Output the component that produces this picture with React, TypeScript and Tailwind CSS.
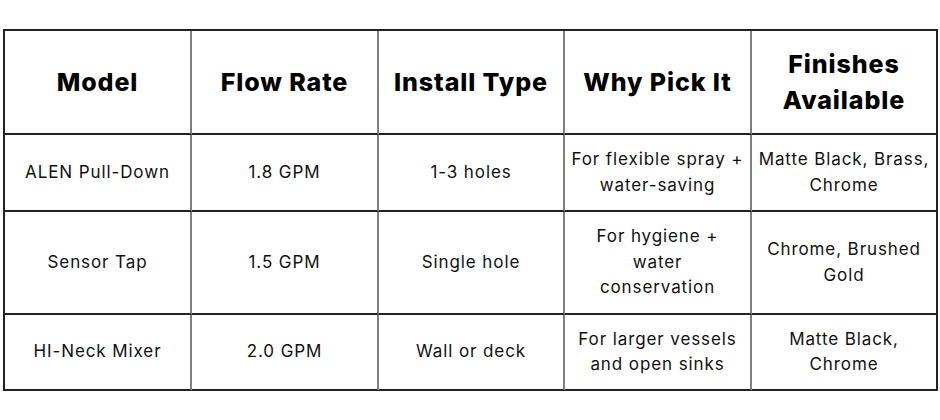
import React from "react";

const widths = ["w-[187px]", "w-[187px]", "w-[186px]", "w-[187px]", "w-[186px]"];

const header: React.ReactNode[] = [
  "Model",
  "Flow Rate",
  "Install Type",
  "Why Pick It",
  <>Finishes<br />Available</>,
];

const rows: { h: string; cells: React.ReactNode[] }[] = [
  {
    h: "h-[77px]",
    cells: [
      "ALEN Pull-Down",
      "1.8 GPM",
      "1-3 holes",
      <>For flexible spray +<br />water-saving</>,
      <>Matte Black, Brass,<br />Chrome</>,
    ],
  },
  {
    h: "h-[103px]",
    cells: [
      "Sensor Tap",
      "1.5 GPM",
      "Single hole",
      <>For hygiene +<br />water<br />conservation</>,
      <>Chrome, Brushed<br />Gold</>,
    ],
  },
  {
    h: "h-[76px]",
    cells: [
      "HI-Neck Mixer",
      "2.0 GPM",
      "Wall or deck",
      <>For larger vessels<br />and open sinks</>,
      <>Matte Black,<br />Chrome</>,
    ],
  },
];

export default function App() {
  return (
    <div className="w-[940px] h-[420px] bg-white pt-[29px] pl-[3px]" style={{ fontFamily: "Inter, 'Noto Sans', sans-serif" }}>
      <div className="inline-flex flex-col border-t-2 border-l-2 border-[#222]">
        <div className="flex h-[104px]">
          {header.map((c, i) => (
            <div
              key={i}
              className={`${widths[i]} flex items-center justify-center text-center border-b-2 border-b-[#222] ${i === 4 ? "border-r-2 border-r-[#222]" : "border-r-2 border-r-[#808080]"} text-[25px] leading-[36px] font-extrabold text-black tracking-[0.9px] whitespace-nowrap`}
            >
              <span>{c}</span>
            </div>
          ))}
        </div>
        {rows.map((r, ri) => (
          <div key={ri} className={`flex ${r.h}`}>
            {r.cells.map((c, i) => (
              <div
                key={i}
                className={`${widths[i]} flex items-center justify-center text-center border-b-2 border-b-[#222] ${i === 4 ? "border-r-2 border-r-[#222]" : "border-r-2 border-r-[#808080]"} text-[17px] leading-[25.5px] text-[#111] tracking-[0.9px] whitespace-nowrap`}
              >
                <span>{c}</span>
              </div>
            ))}
          </div>
        ))}
      </div>
    </div>
  );
}
